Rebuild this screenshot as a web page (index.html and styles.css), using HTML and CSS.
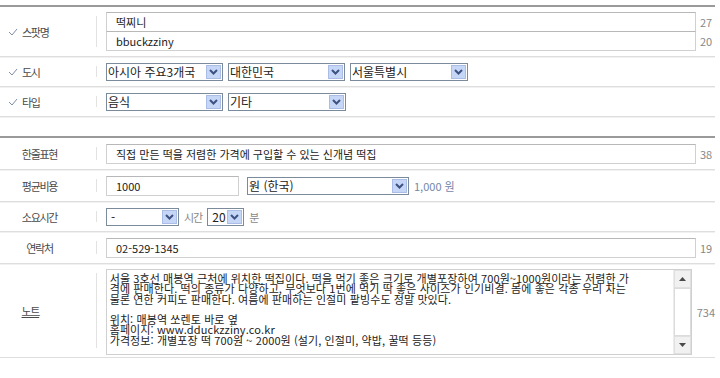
FILE: index.html
```html
<!DOCTYPE html>
<html lang="ko">
<head>
    <meta charset="UTF-8">
    <meta name="viewport" content="width=device-width, initial-scale=1.0">
    <title>스팟 등록</title>
    <link rel="stylesheet" href="styles.css">
</head>
<body>
<div class="page">
    <!-- 필수 항목 -->
    <div class="section">
        <div class="row">
            <div class="label"><svg class="check" width="10" height="8" viewBox="0 0 10 8"><polyline points="1,4 4,7 9,1" fill="none" stroke="#7d8ea6" stroke-width="1"/></svg>스팟명</div>
            <div class="sep"></div>
            <div class="field stack">
                <div class="line"><input class="input" type="text" value="떡찌니"><span class="count">27</span></div>
                <div class="line"><input class="input" type="text" value="bbuckzziny"><span class="count">20</span></div>
            </div>
        </div>
        <div class="row">
            <div class="label"><svg class="check" width="10" height="8" viewBox="0 0 10 8"><polyline points="1,4 4,7 9,1" fill="none" stroke="#7d8ea6" stroke-width="1"/></svg>도시</div>
            <div class="sep"></div>
            <div class="field">
                <div class="select w117"><span>아시아 주요3개국</span><svg class="btn" width="15" height="14" viewBox="0 0 15 14"><rect x="0.5" y="0.5" width="14" height="13" fill="#c6d6f6" stroke="#a9bde6"/><polyline points="4,5 7.5,8.5 11,5" fill="none" stroke="#3d5282" stroke-width="2"/></svg></div>
                <div class="select w117"><span>대한민국</span><svg class="btn" width="15" height="14" viewBox="0 0 15 14"><rect x="0.5" y="0.5" width="14" height="13" fill="#c6d6f6" stroke="#a9bde6"/><polyline points="4,5 7.5,8.5 11,5" fill="none" stroke="#3d5282" stroke-width="2"/></svg></div>
                <div class="select w118"><span>서울특별시</span><svg class="btn" width="15" height="14" viewBox="0 0 15 14"><rect x="0.5" y="0.5" width="14" height="13" fill="#c6d6f6" stroke="#a9bde6"/><polyline points="4,5 7.5,8.5 11,5" fill="none" stroke="#3d5282" stroke-width="2"/></svg></div>
            </div>
        </div>
        <div class="row">
            <div class="label"><svg class="check" width="10" height="8" viewBox="0 0 10 8"><polyline points="1,4 4,7 9,1" fill="none" stroke="#7d8ea6" stroke-width="1"/></svg>타입</div>
            <div class="sep"></div>
            <div class="field">
                <div class="select w117"><span>음식</span><svg class="btn" width="15" height="14" viewBox="0 0 15 14"><rect x="0.5" y="0.5" width="14" height="13" fill="#c6d6f6" stroke="#a9bde6"/><polyline points="4,5 7.5,8.5 11,5" fill="none" stroke="#3d5282" stroke-width="2"/></svg></div>
                <div class="select w118"><span>기타</span><svg class="btn" width="15" height="14" viewBox="0 0 15 14"><rect x="0.5" y="0.5" width="14" height="13" fill="#c6d6f6" stroke="#a9bde6"/><polyline points="4,5 7.5,8.5 11,5" fill="none" stroke="#3d5282" stroke-width="2"/></svg></div>
            </div>
        </div>
    </div>

    <!-- 추가 정보 -->
    <div class="section">
        <div class="row">
            <div class="label center">한줄표현</div>
            <div class="sep"></div>
            <div class="field">
                <div class="line"><input class="input" type="text" value="직접 만든 떡을 저렴한 가격에 구입할 수 있는 신개념 떡집"><span class="count">38</span></div>
            </div>
        </div>
        <div class="row">
            <div class="label center">평균비용</div>
            <div class="sep"></div>
            <div class="field">
                <input class="input short" type="text" value="1000">
                <div class="select w162 gap3"><span>원 (한국)</span><svg class="btn" width="15" height="14" viewBox="0 0 15 14"><rect x="0.5" y="0.5" width="14" height="13" fill="#c6d6f6" stroke="#a9bde6"/><polyline points="4,5 7.5,8.5 11,5" fill="none" stroke="#3d5282" stroke-width="2"/></svg></div>
                <span class="price">1,000 원</span>
            </div>
        </div>
        <div class="row">
            <div class="label center">소요시간</div>
            <div class="sep"></div>
            <div class="field">
                <div class="select w73"><span class="dash">-</span><svg class="btn" width="15" height="14" viewBox="0 0 15 14"><rect x="0.5" y="0.5" width="14" height="13" fill="#c6d6f6" stroke="#a9bde6"/><polyline points="4,5 7.5,8.5 11,5" fill="none" stroke="#3d5282" stroke-width="2"/></svg></div>
                <span class="unit">시간</span>
                <div class="select w37"><span class="num">20</span><svg class="btn" width="15" height="14" viewBox="0 0 15 14"><rect x="0.5" y="0.5" width="14" height="13" fill="#c6d6f6" stroke="#a9bde6"/><polyline points="4,5 7.5,8.5 11,5" fill="none" stroke="#3d5282" stroke-width="2"/></svg></div>
                <span class="unit">분</span>
            </div>
        </div>
        <div class="row">
            <div class="label center">연락처</div>
            <div class="sep"></div>
            <div class="field">
                <div class="line"><input class="input" type="text" value="02-529-1345"><span class="count">19</span></div>
            </div>
        </div>
        <div class="row">
            <div class="label center note"><u>노트</u></div>
            <div class="sep"></div>
            <div class="field memo-field">
                <div class="memo">
                    <div class="memo-text">서울 3호선 매봉역 근처에 위치한 떡집이다. 떡을 먹기 좋은 크기로 개별포장하여 700원~1000원이라는 저렴한 가
격에 판매한다. 떡의 종류가 다양하고, 무엇보다 1번에 먹기 딱 좋은 사이즈가 인기비결. 몸에 좋은 각종 우리 차는
물론 연한 커피도 판매한다. 여름에 판매하는 인절미 팥빙수도 정말 맛있다.

위치: 매봉역 쏘렌토 바로 옆
홈페이지: www.dduckzziny.co.kr
가격정보: 개별포장 떡 700원 ~ 2000원 (설기, 인절미, 약밥, 꿀떡 등등)</div>
                    <div class="scrollbar">
                        <div class="sb-btn"><svg width="7" height="4" viewBox="0 0 7 4"><polygon points="0,4 3.5,0 7,4" fill="#4a4a4a"/></svg></div>
                        <div class="sb-thumb"></div>
                        <div class="sb-track"></div>
                        <div class="sb-btn"><svg width="7" height="4" viewBox="0 0 7 4"><polygon points="0,0 3.5,4 7,0" fill="#4a4a4a"/></svg></div>
                    </div>
                </div>
                <span class="count">734</span>
            </div>
        </div>
    </div>
</div>
</body>
</html>
```

FILE: styles.css
```css
body {
    margin: 5px 0 0;
    font-family: "Noto Sans CJK KR", "Noto Sans", sans-serif;
    color: #222;
    background-color: #fff;
}
.page {
    width: 715px;
}
.section {
    border-top: 2px solid #9a9a9a;
}
.section + .section {
    margin-top: 19px;
}
.row {
    display: flex;
    border-bottom: 1px solid #dedede;
    box-shadow: 0 1px 0 #f1f1f1;
}
.label {
    width: 96px;
    box-sizing: border-box;
    padding-left: 8px;
    display: flex;
    align-items: center;
    font-size: 11px;
    letter-spacing: -1.3px;
    color: #4a4a4a;
}
.label.center {
    justify-content: center;
    padding-left: 0;
    padding-right: 17px;
}
.label.note {
    padding-right: 35px;
}
.check {
    margin-right: 4px;
}
.sep {
    width: 1px;
    background-color: #e2e2e2;
    margin: 9px 0;
}
.field {
    margin-left: 9px;
    padding: 6px 0 5px;
    display: flex;
    align-items: center;
    gap: 5px;
    font-size: 11px;
}
.field.stack {
    flex-direction: column;
    align-items: flex-start;
    gap: 0;
    padding: 5px 0;
}
.stack .line + .line {
    margin-top: -1px;
}
.line {
    display: flex;
    align-items: center;
}
.input {
    width: 590px;
    height: 20px;
    box-sizing: border-box;
    margin: 0;
    border: 1px solid #d0d0d0;
    border-top-color: #b8b8b8;
    padding: 0 9px;
    font: 11px "Noto Sans CJK KR", "Noto Sans", sans-serif;
    color: #222;
    background-color: #fff;
    outline: none;
}
.input.short {
    width: 133px;
}
.count {
    margin-left: 4px;
    font-size: 11px;
    color: #888;
}
.select {
    height: 18px;
    box-sizing: border-box;
    border: 1px solid #7c8b9c;
    padding: 0 1px 0 1px;
    display: flex;
    align-items: center;
    justify-content: space-between;
    font-size: 12px;
    color: #222;
    background-color: #fff;
    white-space: nowrap;
}
.select span {
    line-height: 16px;
}
.select .dash {
    padding-left: 3px;
}
.select .num {
    padding-left: 3px;
}
.btn {
    flex: none;
}
.w117 { width: 117px; }
.w118 { width: 118px; }
.w162 { width: 162px; }
.w73 { width: 73px; }
.w37 { width: 37px; }
.gap3 {
    margin-left: 3px;
}
.price {
    color: #7388a8;
}
.unit {
    font-size: 11px;
    letter-spacing: -1px;
    color: #888;
}
.field.memo-field {
    padding: 5px 0 2px;
    gap: 0;
}
.memo {
    width: 586px;
    height: 86px;
    box-sizing: border-box;
    border: 1px solid #d0d0d0;
    display: flex;
}
.memo-text {
    flex: 1;
    padding: 3px 3px;
    font-size: 11px;
    line-height: 10.3px;
    letter-spacing: 0.1px;
    white-space: pre;
    overflow: hidden;
    color: #222;
}
.memo + .count {
    margin-left: 5px;
}
.scrollbar {
    width: 17px;
    display: flex;
    flex-direction: column;
    background-color: #f6f6f6;
    border-left: 1px solid #ececec;
}
.sb-btn {
    height: 16px;
    display: flex;
    align-items: center;
    justify-content: center;
    background-color: #f1f1f1;
    border: 1px solid #e0e0e0;
}
.sb-thumb {
    height: 48px;
    background-color: #fff;
    border: 1px solid #dcdcdc;
}
.sb-track {
    flex: 1;
}
```
